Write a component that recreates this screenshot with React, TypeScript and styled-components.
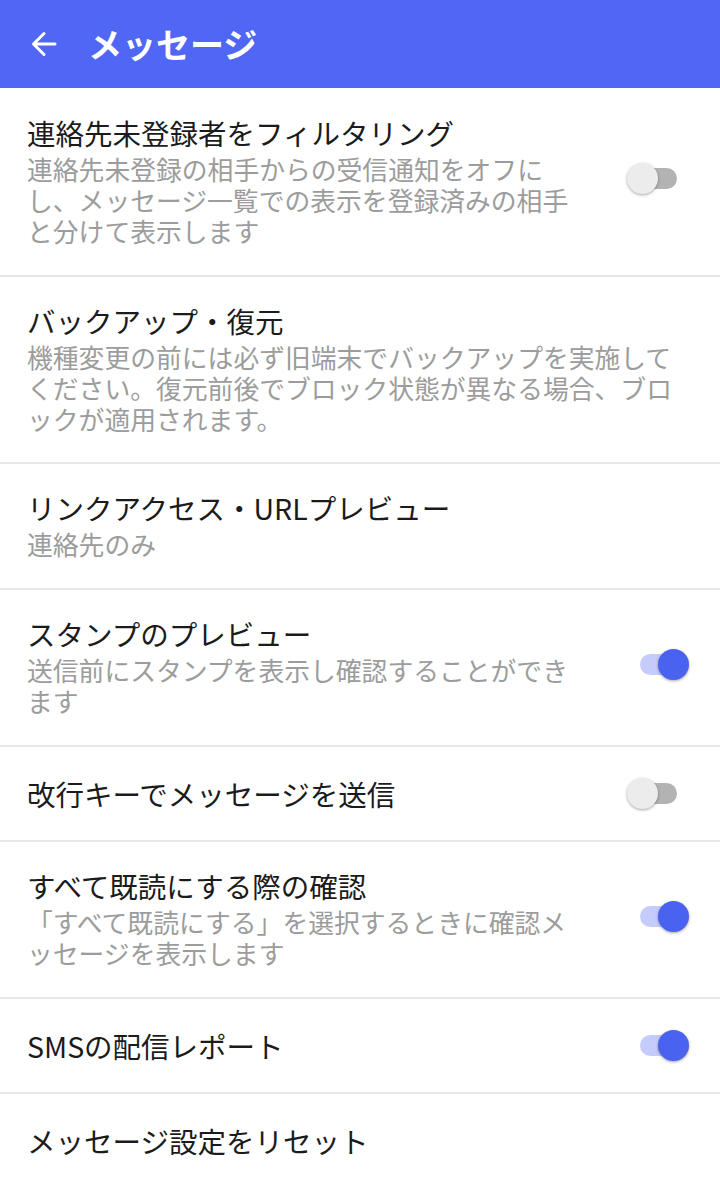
import * as React from "react";
import styled, { createGlobalStyle } from "styled-components";

const GlobalStyle = createGlobalStyle`
  html, body {
    margin: 0;
    padding: 0;
    background: #ffffff;
  }
  body {
    font-family: "Noto Sans CJK JP", "Noto Sans", sans-serif;
    -webkit-font-smoothing: antialiased;
  }
`;

const Screen = styled.div`
  width: 720px;
  min-height: 1178px;
  background: #ffffff;
  display: flex;
  flex-direction: column;
`;

const Header = styled.header`
  height: 88px;
  background: #5066f5;
  display: flex;
  align-items: center;
  padding-left: 30px;
  gap: 30px;
  box-sizing: border-box;
`;

const BackButton = styled.button`
  width: 28px;
  height: 28px;
  padding: 0;
  border: none;
  background: transparent;
  display: flex;
  align-items: center;
  justify-content: center;
`;

const HeaderTitle = styled.h1`
  margin: 0;
  color: #ffffff;
  font-size: 34px;
  font-weight: 700;
  line-height: 40px;
`;

const List = styled.ul`
  list-style: none;
  margin: 0;
  padding: 0;
`;

const Row = styled.li<{ $single?: boolean }>`
  display: flex;
  align-items: center;
  padding: ${(p) => (p.$single ? "26px 31px 25px 27px" : "23px 31px 28px 27px")};
  border-bottom: 2px solid #e8e8e8;
  &:first-child {
    padding-top: 24px;
  }
  &:last-child {
    border-bottom: none;
  }
`;

const TextBlock = styled.div<{ $withToggle?: boolean }>`
  flex: 1;
  min-width: 0;
  padding-right: ${(p) => (p.$withToggle ? "45px" : "0")};
`;

const Title = styled.div`
  font-size: 28.5px;
  line-height: 42px;
  color: #1b1b1b;
`;

const Sub = styled.div`
  font-size: 25.8px;
  line-height: 30.9px;
  color: #9c9c9c;
`;

const Switch = styled.div<{ $on: boolean }>`
  position: relative;
  width: 62px;
  height: 32px;
  flex-shrink: 0;
`;

const Track = styled.div<{ $on: boolean }>`
  position: absolute;
  left: 13px;
  right: 12px;
  top: 5px;
  height: 21px;
  border-radius: 11px;
  background: ${(p) => (p.$on ? "#c5ccfb" : "#b3b3b3")};
`;

const Thumb = styled.div<{ $on: boolean }>`
  position: absolute;
  top: 0;
  left: ${(p) => (p.$on ? "31px" : "0")};
  width: 31px;
  height: 31px;
  border-radius: 50%;
  background: ${(p) => (p.$on ? "#4a62f0" : "#ececec")};
  box-shadow: 0 1px 3px rgba(0, 0, 0, 0.35);
`;

type Setting = {
  title: string;
  sub?: string;
  toggle?: boolean;
};

const settings: Setting[] = [
  {
    title: "連絡先未登録者をフィルタリング",
    sub: "連絡先未登録の相手からの受信通知をオフにし、メッセージ一覧での表示を登録済みの相手と分けて表示します",
    toggle: false,
  },
  {
    title: "バックアップ・復元",
    sub: "機種変更の前には必ず旧端末でバックアップを実施してください。復元前後でブロック状態が異なる場合、ブロックが適用されます。",
  },
  {
    title: "リンクアクセス・URLプレビュー",
    sub: "連絡先のみ",
  },
  {
    title: "スタンプのプレビュー",
    sub: "送信前にスタンプを表示し確認することができます",
    toggle: true,
  },
  {
    title: "改行キーでメッセージを送信",
    toggle: false,
  },
  {
    title: "すべて既読にする際の確認",
    sub: "「すべて既読にする」を選択するときに確認メッセージを表示します",
    toggle: true,
  },
  {
    title: "SMSの配信レポート",
    toggle: true,
  },
  {
    title: "メッセージ設定をリセット",
  },
];

const Toggle = ({ on }: { on: boolean }) => (
  <Switch $on={on}>
    <Track $on={on} />
    <Thumb $on={on} />
  </Switch>
);

const App = () => {
  const [values, setValues] = React.useState<(boolean | undefined)[]>(
    settings.map((s) => s.toggle)
  );

  return (
    <Screen>
      <GlobalStyle />
      <Header>
        <BackButton aria-label="戻る">
          <svg width="26" height="26" viewBox="0 0 26 26" fill="none">
            <path
              d="M24 13H3M13 2.5L2.5 13L13 23.5"
              stroke="#ffffff"
              strokeWidth="3"
              strokeLinecap="round"
              strokeLinejoin="round"
            />
          </svg>
        </BackButton>
        <HeaderTitle>メッセージ</HeaderTitle>
      </Header>
      <List>
        {settings.map((s, i) => {
          const hasToggle = values[i] !== undefined;
          return (
            <Row
              key={s.title}
              $single={!s.sub}
              onClick={() =>
                hasToggle &&
                setValues((v) => v.map((x, j) => (j === i ? !x : x)))
              }
            >
              <TextBlock $withToggle={hasToggle}>
                <Title>{s.title}</Title>
                {s.sub && <Sub>{s.sub}</Sub>}
              </TextBlock>
              {hasToggle && <Toggle on={!!values[i]} />}
            </Row>
          );
        })}
      </List>
    </Screen>
  );
};

export default App;
